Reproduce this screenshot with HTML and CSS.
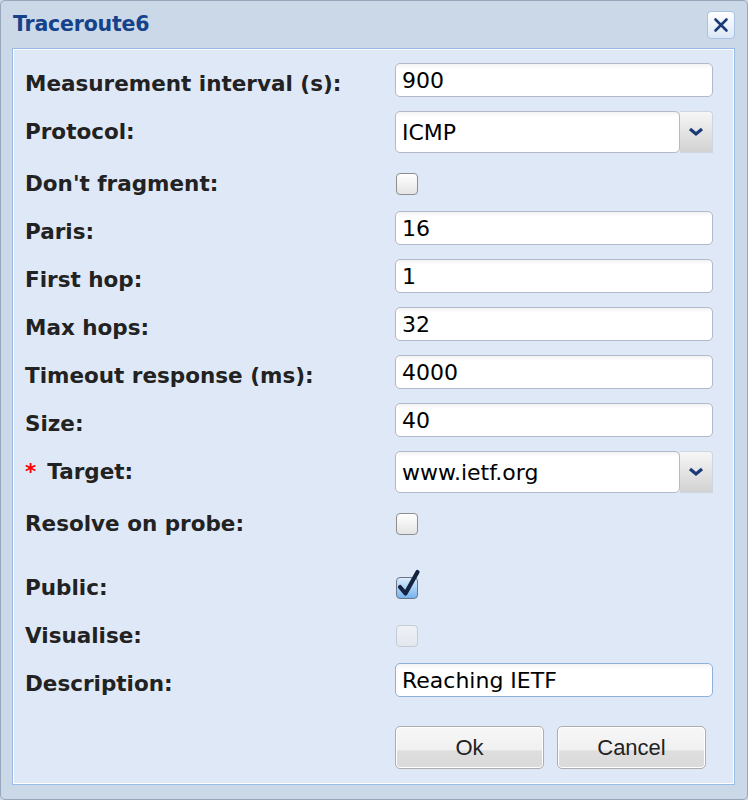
FILE: index.html
```html
<!DOCTYPE html>
<html>
<head>
<meta charset="utf-8">
<link rel="stylesheet" href="styles.css">
</head>
<body>
<div class="window">
  <div class="header">
    <div class="title">Traceroute6</div>
    <div class="close">
      <svg width="26" height="26" viewBox="0 0 26 26"><path d="M7.5 7.5 L18.5 18.5 M18.5 7.5 L7.5 18.5" stroke="#1b3a78" stroke-width="2.6" stroke-linecap="round" fill="none"/></svg>
    </div>
  </div>
  <div class="panel">
    <div class="row">
      <div class="label">Measurement interval (s):</div>
      <div class="field"><div class="input">900</div></div>
    </div>
    <div class="row combo-row">
      <div class="label">Protocol:</div>
      <div class="field combo">
        <div class="input combo-input">ICMP</div>
        <div class="trigger"><svg width="16" height="10" viewBox="0 0 16 10"><path d="M2 2 L8 7 L14 2" stroke="#1b3a78" stroke-width="3.2" fill="none"/></svg></div>
      </div>
    </div>
    <div class="row">
      <div class="label">Don't fragment:</div>
      <div class="field"><div class="check"></div></div>
    </div>
    <div class="row">
      <div class="label">Paris:</div>
      <div class="field"><div class="input">16</div></div>
    </div>
    <div class="row">
      <div class="label">First hop:</div>
      <div class="field"><div class="input">1</div></div>
    </div>
    <div class="row">
      <div class="label">Max hops:</div>
      <div class="field"><div class="input">32</div></div>
    </div>
    <div class="row">
      <div class="label">Timeout response (ms):</div>
      <div class="field"><div class="input">4000</div></div>
    </div>
    <div class="row">
      <div class="label">Size:</div>
      <div class="field"><div class="input">40</div></div>
    </div>
    <div class="row combo-row">
      <div class="label"><span class="req">*</span>Target:</div>
      <div class="field combo">
        <div class="input combo-input">www.ietf.org</div>
        <div class="trigger"><svg width="16" height="10" viewBox="0 0 16 10"><path d="M2 2 L8 7 L14 2" stroke="#1b3a78" stroke-width="3.2" fill="none"/></svg></div>
      </div>
    </div>
    <div class="row tall-row">
      <div class="label">Resolve on probe:</div>
      <div class="field"><div class="check"></div></div>
    </div>
    <div class="row">
      <div class="label">Public:</div>
      <div class="field">
        <div class="check checked">
          <svg class="tick" width="30" height="32" viewBox="0 0 30 32"><path d="M4 19 L9.5 25.5 L21.5 4" stroke="#142340" stroke-width="4.2" stroke-linecap="round" stroke-linejoin="round" fill="none"/></svg>
        </div>
      </div>
    </div>
    <div class="row">
      <div class="label">Visualise:</div>
      <div class="field"><div class="check disabled"></div></div>
    </div>
    <div class="row last-row">
      <div class="label">Description:</div>
      <div class="field"><div class="input focus">Reaching IETF</div></div>
    </div>
    <div class="buttons">
      <div class="btn">Ok</div>
      <div class="btn">Cancel</div>
    </div>
  </div>
</div>
</body>
</html>
```
FILE: styles.css
```css
html, body {
  margin: 0;
  padding: 0;
}
body {
  width: 748px;
  height: 800px;
  background: #cbd8e7;
  font-family: "DejaVu Sans", Verdana, sans-serif;
}
.window {
  box-sizing: border-box;
  width: 748px;
  height: 800px;
  border: 1px solid #97a6bb;
  border-radius: 5px;
  background: #cbd8e7;
  padding: 0 12px 14px 11px;
  display: flex;
  flex-direction: column;
}
.header {
  height: 47px;
  display: flex;
  align-items: center;
  justify-content: space-between;
  flex: none;
}
.title {
  font-weight: bold;
  font-size: 20.5px;
  color: #15428b;
  padding-left: 1px;
  margin-top: -1px;
  letter-spacing: -0.2px;
}
.close {
  box-sizing: border-box;
  width: 28px;
  height: 28px;
  border: 1px solid #a9c2e6;
  border-radius: 4px;
  background: linear-gradient(#ffffff, #dce7f6);
  display: flex;
  align-items: center;
  justify-content: center;
  margin-top: 0px;
}
.panel {
  box-sizing: border-box;
  height: 737px;
  border: 1px solid #99bbe8;
  box-shadow: inset 0 0 0 1px #ffffff;
  background: #dfe8f6;
  padding: 14px 0 0 12px;
  display: flex;
  flex-direction: column;
  flex: none;
}
.row {
  display: flex;
  height: 48px;
  flex: none;
}
.combo-row { height: 52px; }
.tall-row { height: 64px; }
.last-row { height: 63px; }
.label {
  width: 370px;
  flex: none;
  font-weight: bold;
  font-size: 21.5px;
  line-height: 41px;
  color: #222222;
  white-space: nowrap;
}
.req {
  color: #ff0000;
  margin-right: 11px;
}
.field {
  width: 318px;
  flex: none;
}
.input {
  box-sizing: border-box;
  width: 318px;
  height: 34px;
  border: 1px solid #b5b8c8;
  border-radius: 5px;
  background: linear-gradient(#f3f3f3 0px, #ffffff 5px, #ffffff 100%);
  padding-left: 6px;
  font-size: 22px;
  line-height: 34px;
  color: #000000;
  white-space: nowrap;
}
.input.focus {
  border-color: #8fb0db;
}
.combo {
  display: flex;
}
.combo-input {
  width: 285px;
  height: 42px;
  line-height: 42px;
}
.trigger {
  box-sizing: border-box;
  width: 33px;
  height: 42px;
  border: 1px solid #d0d4dc;
  border-left: none;
  border-radius: 0 4px 0 0;
  background: linear-gradient(#f6f6f6, #d2d2d2);
  display: flex;
  align-items: center;
  justify-content: center;
}
.check {
  position: relative;
  box-sizing: border-box;
  width: 22px;
  height: 22px;
  margin-top: 10px;
  margin-left: 1px;
  border: 1px solid #8e8e8e;
  border-radius: 4px;
  background: linear-gradient(#ffffff, #e4e4e4);
}
.check.checked {
  border-color: #6c7486;
  background: linear-gradient(#dcecfb, #a9d0f5 50%, #74b5ef);
}
.check.disabled {
  border-color: #c6ccd6;
  background: linear-gradient(#eef1f6, #e3e8ef);
}
.tick {
  position: absolute;
  left: -1px;
  top: -10px;
}
.buttons {
  display: flex;
  gap: 13px;
  padding-left: 370px;
}
.btn {
  box-sizing: border-box;
  width: 149px;
  height: 43px;
  border: 1px solid #adadad;
  border-radius: 5px;
  background: linear-gradient(#f7f7f7 0%, #f0f0f0 56%, #dedede 58%, #dadada 100%);
  box-shadow: inset 0 0 0 1px #ffffff;
  font-family: "Liberation Sans", Arial, sans-serif;
  font-size: 22px;
  color: #222222;
  text-align: center;
  line-height: 41px;
}
```
